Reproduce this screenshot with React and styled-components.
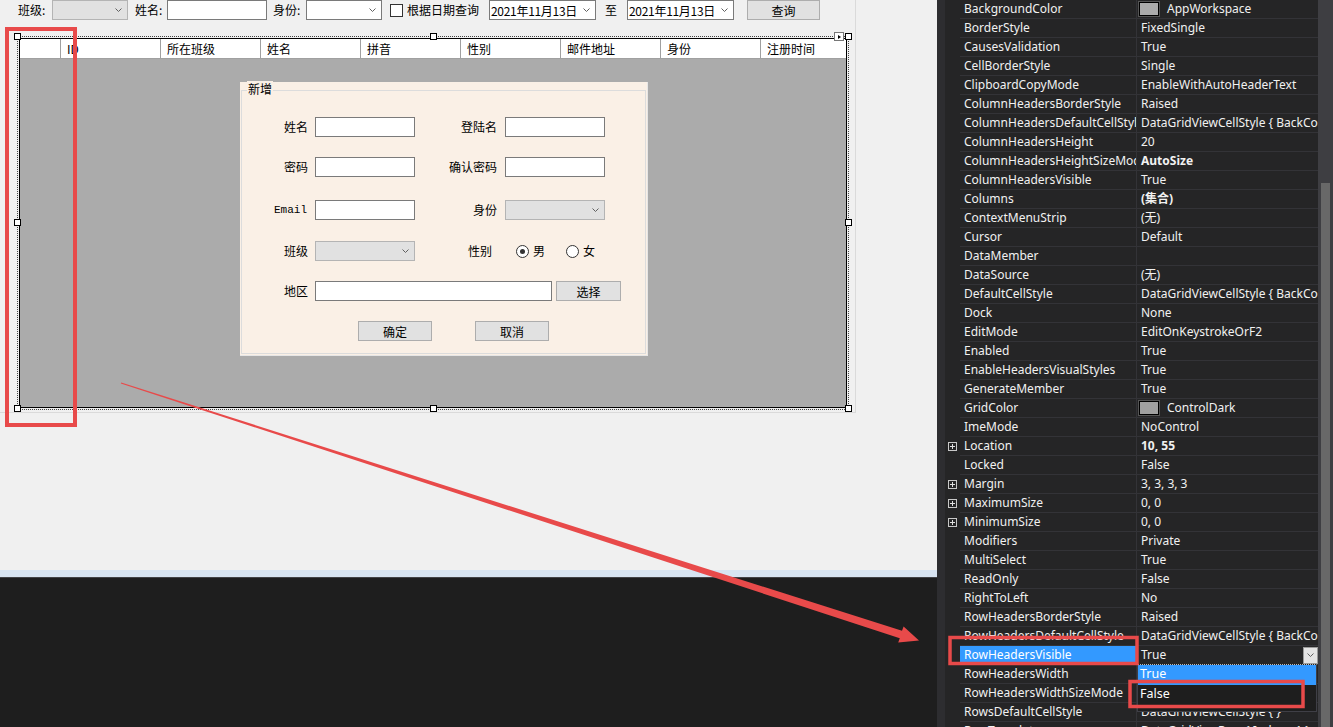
import React from 'react';
import styled, { createGlobalStyle } from 'styled-components';

const GlobalStyle = createGlobalStyle`
  html, body {
    margin: 0;
    padding: 0;
    overflow: hidden;
  }
  body {
    width: 1333px;
    height: 727px;
    font-family: "Noto Sans CJK SC", "Noto Sans", sans-serif;
  }
`;

const Screen = styled.div`
  position: relative;
  width: 1333px;
  height: 727px;
  display: flex;
  overflow: hidden;
`;

/* ---------- designer (left) ---------- */

const Designer = styled.div`
  width: 937px;
  display: flex;
  flex-direction: column;
`;

const Surface = styled.div`
  height: 570px;
  background: #f0f0f0;
`;

const Band = styled.div`
  height: 7px;
  background: #d8e4f1;
`;

const Output = styled.div`
  flex: 1;
  background: #1e1e1e;
  border-top: 1px solid #434346;
`;

const Form = styled.div`
  box-sizing: border-box;
  width: 856px;
  height: 413px;
  border-right: 1px solid #dadada;
  border-bottom: 1px solid #dadada;
  font-size: 12px;
  color: #000;
`;

const Toolbar = styled.div`
  display: flex;
  align-items: center;
  height: 20px;
`;

const Label = styled.span`
  flex: none;
  width: ${(p) => p.$w}px;
  margin-left: ${(p) => p.$ml || 0}px;
  padding-right: ${(p) => p.$pr || 0}px;
  box-sizing: border-box;
  text-align: ${(p) => (p.$right ? 'right' : 'left')};
  font-size: 12px;
  line-height: 20px;
  white-space: nowrap;
`;

const MonoLabel = styled(Label)`
  font-family: "Liberation Mono", monospace;
  font-size: 11px;
`;

const TextBox = styled.div`
  flex: none;
  box-sizing: border-box;
  width: ${(p) => p.$w}px;
  height: 20px;
  margin-left: ${(p) => p.$ml || 0}px;
  background: #fff;
  border: 1px solid #7a7a7a;
`;

const Combo = styled.div`
  flex: none;
  box-sizing: border-box;
  width: ${(p) => p.$w}px;
  height: 20px;
  margin-left: ${(p) => p.$ml || 0}px;
  display: flex;
  align-items: center;
  padding: 0 5px 0 1px;
  background: ${(p) => (p.$disabled ? '#e1e1e1' : '#fff')};
  border: 1px solid ${(p) => (p.$disabled ? '#b4b4b4' : '#7a7a7a')};
  font-size: 12px;
  white-space: nowrap;
  overflow: hidden;
`;

const ComboText = styled.span`
  flex: 1;
  letter-spacing: -0.3px;
`;

const Button = styled.div`
  flex: none;
  box-sizing: border-box;
  width: ${(p) => p.$w}px;
  height: 20px;
  margin-left: ${(p) => p.$ml || 0}px;
  background: #e1e1e1;
  border: 1px solid #adadad;
  display: flex;
  align-items: center;
  justify-content: center;
  font-size: 12px;
`;

const CheckBox = styled.div`
  flex: none;
  box-sizing: border-box;
  width: 13px;
  height: 13px;
  margin-left: ${(p) => p.$ml || 0}px;
  background: #fff;
  border: 1px solid #333;
`;

const Radio = styled.div`
  flex: none;
  box-sizing: border-box;
  width: 13px;
  height: 13px;
  margin-left: ${(p) => p.$ml || 0}px;
  border-radius: 50%;
  border: 1px solid #333;
  background: #fff;
  display: flex;
  align-items: center;
  justify-content: center;

  &::after {
    content: '';
    display: ${(p) => (p.$checked ? 'block' : 'none')};
    width: 5px;
    height: 5px;
    border-radius: 50%;
    background: #333;
  }
`;

const Chevron = () => (
  <svg width="7" height="4" viewBox="0 0 7 4">
    <polyline points="0.5,0.5 3.5,3.5 6.5,0.5" fill="none" stroke="#606060" strokeWidth="1" />
  </svg>
);

/* ---------- data grid ---------- */

const GridFrame = styled.div`
  position: relative;
  box-sizing: border-box;
  width: 832px;
  height: 374px;
  margin: 16px 0 0 17px;
  border: 1px dotted #444;
  padding: 1px;
`;

const Handle = styled.div`
  position: absolute;
  left: ${(p) => p.$x - 4}px;
  top: ${(p) => p.$y - 4}px;
  width: 5px;
  height: 5px;
  background: #fff;
  border: 1px solid #000;
`;

const SmartTag = styled.div`
  position: absolute;
  right: 4px;
  top: -5px;
  width: 8px;
  height: 7px;
  background: #fff;
  border: 1px solid #777;
  display: flex;
  align-items: center;
  justify-content: center;

  &::after {
    content: '';
    border-left: 3px solid #000;
    border-top: 2px solid transparent;
    border-bottom: 2px solid transparent;
  }
`;

const Grid = styled.div`
  box-sizing: border-box;
  width: 828px;
  height: 370px;
  border: 1px solid #000;
  background: #ababab;
  display: flex;
  flex-direction: column;
`;

const HeaderRow = styled.div`
  flex: none;
  display: flex;
  height: 20px;
  box-sizing: border-box;
  background: #fff;
  border-bottom: 1px solid #a0a0a0;
`;

const HeaderCell = styled.div`
  flex: ${(p) => (p.$fill ? 1 : 'none')};
  width: ${(p) => p.$w}px;
  box-sizing: border-box;
  border-right: ${(p) => (p.$fill ? 'none' : '1px solid #a0a0a0')};
  padding-left: 6px;
  font-size: 12px;
  line-height: 19px;
  white-space: nowrap;
`;

const GridBody = styled.div`
  flex: 1;
  padding: 23px 0 0 220px;
`;

/* ---------- linen panel / group box ---------- */

const Panel = styled.div`
  box-sizing: border-box;
  width: 408px;
  height: 274px;
  padding: 8px 1px 1px;
  background: #faf0e6;
  border-right: 1px solid #e6e6e6;
  border-bottom: 1px solid #e6e6e6;
  display: flex;
`;

const GroupBox = styled.div`
  position: relative;
  flex: 1;
  border: 1px solid #dcdcdc;
  padding-top: 26px;
  display: flex;
  flex-direction: column;
`;

const Legend = styled.span`
  position: absolute;
  left: 5px;
  top: -10px;
  padding: 0 1px;
  background: #faf0e6;
  font-size: 12px;
  line-height: 16px;
`;

const FieldRow = styled.div`
  display: flex;
  align-items: center;
  height: 20px;
  margin-top: ${(p) => p.$mt || 0}px;
  padding-left: ${(p) => p.$pl || 0}px;
`;

/* ---------- property grid (right) ---------- */

const Props = styled.div`
  flex: 1;
  display: flex;
  background: #252526;
  font-family: "Noto Sans", "Noto Sans CJK SC", sans-serif;
  font-size: 12px;
  color: #f1f1f1;
`;

const Strip = styled.div`
  width: 8px;
  background: #2d2d30;
`;

const PropArea = styled.div`
  position: relative;
  width: 373px;
  overflow: hidden;
`;

const PropList = styled.div`
  display: flex;
  flex-direction: column;
`;

const PropRow = styled.div`
  display: flex;
  height: 19px;
`;

const Gutter = styled.div`
  flex: none;
  width: 15px;
  display: flex;
  align-items: center;
  justify-content: center;
`;

const Expander = styled.div`
  position: relative;
  width: 7px;
  height: 7px;
  border: 1px solid #c8c8c8;

  &::before,
  &::after {
    content: '';
    position: absolute;
    background: #e0e0e0;
  }
  &::before {
    left: 1px;
    top: 3px;
    width: 5px;
    height: 1px;
  }
  &::after {
    left: 3px;
    top: 1px;
    width: 1px;
    height: 5px;
  }
`;

const NameCell = styled.div`
  flex: none;
  width: 177px;
  box-sizing: border-box;
  padding-left: 4px;
  border-right: 1px solid #333337;
  border-bottom: 1px solid #333337;
  background: ${(p) => (p.$selected ? '#3399ff' : 'transparent')};
  color: ${(p) => (p.$selected ? '#fff' : '#f1f1f1')};
  line-height: 18px;
  white-space: nowrap;
  overflow: hidden;
`;

const ValueCell = styled.div`
  flex: 1;
  min-width: 0;
  box-sizing: border-box;
  padding-left: 4px;
  border-bottom: 1px solid #333337;
  display: flex;
  align-items: center;
  line-height: 18px;
  font-weight: ${(p) => (p.$bold ? 700 : 400)};
  white-space: nowrap;
  overflow: hidden;
`;

const Swatch = styled.span`
  flex: none;
  width: 18px;
  height: 12px;
  margin: 0 8px 0 -2px;
  background: ${(p) => p.$color};
  border: 1px solid #000;
  outline: 1px solid #555;
`;

const DropButton = styled.div`
  flex: none;
  margin-left: auto;
  width: 15px;
  height: 17px;
  box-sizing: border-box;
  background: #e4e4e4;
  border: 1px solid #9a9a9a;
  display: flex;
  align-items: center;
  justify-content: center;
`;

const DropList = styled.div`
  position: absolute;
  left: 192px;
  top: 664px;
  width: 180px;
  height: 48px;
  box-sizing: border-box;
  background: #1e1e1e;
  border: 1px solid #3f3f46;
  border-top: 1px dotted #bbb;
  font-size: 12.5px;
`;

const DropItem = styled.div`
  height: 20px;
  padding-left: 2px;
  line-height: 18px;
  background: ${(p) => (p.$active ? '#3399ff' : 'transparent')};
  color: #fff;
`;

const ScrollBar = styled.div`
  width: 15px;
  background: #3e3e42;
  display: flex;
  justify-content: center;
  padding-top: 183px;
  box-sizing: border-box;
`;

const Thumb = styled.div`
  width: 9px;
  height: 544px;
  background: #686868;
`;

const Overlay = styled.svg`
  position: absolute;
  left: 0;
  top: 0;
  pointer-events: none;
`;

const columns = ['ID', '所在班级', '姓名', '拼音', '性别', '邮件地址', '身份', '注册时间'];

const props = [
  { n: 'BackgroundColor', v: 'AppWorkspace', swatch: '#ababab' },
  { n: 'BorderStyle', v: 'FixedSingle' },
  { n: 'CausesValidation', v: 'True' },
  { n: 'CellBorderStyle', v: 'Single' },
  { n: 'ClipboardCopyMode', v: 'EnableWithAutoHeaderText' },
  { n: 'ColumnHeadersBorderStyle', v: 'Raised' },
  { n: 'ColumnHeadersDefaultCellStyle', v: 'DataGridViewCellStyle { BackColor=Color [Control] }' },
  { n: 'ColumnHeadersHeight', v: '20' },
  { n: 'ColumnHeadersHeightSizeMode', v: 'AutoSize', bold: true },
  { n: 'ColumnHeadersVisible', v: 'True' },
  { n: 'Columns', v: '(集合)', bold: true },
  { n: 'ContextMenuStrip', v: '(无)' },
  { n: 'Cursor', v: 'Default' },
  { n: 'DataMember', v: '' },
  { n: 'DataSource', v: '(无)' },
  { n: 'DefaultCellStyle', v: 'DataGridViewCellStyle { BackColor=Color [Window] }' },
  { n: 'Dock', v: 'None' },
  { n: 'EditMode', v: 'EditOnKeystrokeOrF2' },
  { n: 'Enabled', v: 'True' },
  { n: 'EnableHeadersVisualStyles', v: 'True' },
  { n: 'GenerateMember', v: 'True' },
  { n: 'GridColor', v: 'ControlDark', swatch: '#a0a0a0' },
  { n: 'ImeMode', v: 'NoControl' },
  { n: 'Location', v: '10, 55', bold: true, expand: true },
  { n: 'Locked', v: 'False' },
  { n: 'Margin', v: '3, 3, 3, 3', expand: true },
  { n: 'MaximumSize', v: '0, 0', expand: true },
  { n: 'MinimumSize', v: '0, 0', expand: true },
  { n: 'Modifiers', v: 'Private' },
  { n: 'MultiSelect', v: 'True' },
  { n: 'ReadOnly', v: 'False' },
  { n: 'RightToLeft', v: 'No' },
  { n: 'RowHeadersBorderStyle', v: 'Raised' },
  { n: 'RowHeadersDefaultCellStyle', v: 'DataGridViewCellStyle { BackColor=Color [Control] }' },
  { n: 'RowHeadersVisible', v: 'True', selected: true },
  { n: 'RowHeadersWidth', v: '41' },
  { n: 'RowHeadersWidthSizeMode', v: 'EnableResizing' },
  { n: 'RowsDefaultCellStyle', v: 'DataGridViewCellStyle { }' },
  { n: 'RowTemplate', v: 'DataGridViewRow { Index=-1 }', expand: true },
];

const handles = [
  [0, 0], [416, 0], [831, 0],
  [0, 186], [831, 186],
  [0, 372], [416, 372], [831, 372],
];

const red = '#e84a4a';

export default function App() {
  return (
    <Screen>
      <GlobalStyle />
      <Designer>
        <Surface>
          <Form>
            <Toolbar>
              <Label $w={34} $ml={18}>班级:</Label>
              <Combo $w={76} $disabled>
                <ComboText />
                <Chevron />
              </Combo>
              <Label $w={32} $ml={7}>姓名:</Label>
              <TextBox $w={100} />
              <Label $w={33} $ml={6}>身份:</Label>
              <Combo $w={76}>
                <ComboText />
                <Chevron />
              </Combo>
              <CheckBox $ml={8} />
              <Label $w={82} $ml={4}>根据日期查询</Label>
              <Combo $w={107}>
                <ComboText>2021年11月13日</ComboText>
                <Chevron />
              </Combo>
              <Label $w={22} $ml={9}>至</Label>
              <Combo $w={107}>
                <ComboText>2021年11月13日</ComboText>
                <Chevron />
              </Combo>
              <Button $w={73} $ml={13}>查询</Button>
            </Toolbar>

            <GridFrame>
              <Grid>
                <HeaderRow>
                  <HeaderCell $w={41} />
                  {columns.map((c, i) => (
                    <HeaderCell key={c} $w={100} $fill={i === columns.length - 1}>
                      {c}
                    </HeaderCell>
                  ))}
                </HeaderRow>
                <GridBody>
                  <Panel>
                    <GroupBox>
                      <Legend>新增</Legend>
                      <FieldRow>
                        <Label $w={66} $right>姓名</Label>
                        <TextBox $w={100} $ml={7} />
                        <Label $w={82} $right>登陆名</Label>
                        <TextBox $w={100} $ml={8} />
                      </FieldRow>
                      <FieldRow $mt={20}>
                        <Label $w={66} $right>密码</Label>
                        <TextBox $w={100} $ml={7} />
                        <Label $w={82} $right>确认密码</Label>
                        <TextBox $w={100} $ml={8} />
                      </FieldRow>
                      <FieldRow $mt={23}>
                        <MonoLabel $w={66} $pr={1} $right>Email</MonoLabel>
                        <TextBox $w={100} $ml={7} />
                        <Label $w={82} $right>身份</Label>
                        <Combo $w={100} $ml={8} $disabled>
                          <ComboText />
                          <Chevron />
                        </Combo>
                      </FieldRow>
                      <FieldRow $mt={21}>
                        <Label $w={66} $right>班级</Label>
                        <Combo $w={100} $ml={7} $disabled>
                          <ComboText />
                          <Chevron />
                        </Combo>
                        <Label $w={82} $pr={5} $right>性别</Label>
                        <Radio $ml={19} $checked />
                        <Label $w={14} $ml={4}>男</Label>
                        <Radio $ml={19} />
                        <Label $w={14} $ml={4}>女</Label>
                      </FieldRow>
                      <FieldRow $mt={20}>
                        <Label $w={66} $right>地区</Label>
                        <TextBox $w={237} $ml={7} />
                        <Button $w={65} $ml={4}>选择</Button>
                      </FieldRow>
                      <FieldRow $mt={20} $pl={116}>
                        <Button $w={74}>确定</Button>
                        <Button $w={74} $ml={43}>取消</Button>
                      </FieldRow>
                    </GroupBox>
                  </Panel>
                </GridBody>
              </Grid>
              {handles.map(([x, y]) => (
                <Handle key={`${x}-${y}`} $x={x} $y={y} />
              ))}
              <SmartTag />
            </GridFrame>
          </Form>
        </Surface>
        <Band />
        <Output />
      </Designer>

      <Props>
        <Strip />
        <PropArea>
          <PropList>
            {props.map((p) => (
              <PropRow key={p.n}>
                <Gutter>{p.expand && <Expander />}</Gutter>
                <NameCell $selected={p.selected}>{p.n}</NameCell>
                <ValueCell $bold={p.bold}>
                  {p.swatch && <Swatch $color={p.swatch} />}
                  {p.v}
                  {p.selected && (
                    <DropButton>
                      <Chevron />
                    </DropButton>
                  )}
                </ValueCell>
              </PropRow>
            ))}
          </PropList>
          <DropList>
            <DropItem $active>True</DropItem>
            <DropItem>False</DropItem>
          </DropList>
        </PropArea>
        <ScrollBar>
          <Thumb />
        </ScrollBar>
      </Props>

      <Overlay width="1333" height="727" viewBox="0 0 1333 727">
        <rect x="7" y="29" width="68" height="396" fill="none" stroke={red} strokeWidth="4" />
        <rect x="950" y="637.5" width="187" height="26" fill="none" stroke={red} strokeWidth="3.5" />
        <rect x="1130" y="681.5" width="173" height="25" fill="none" stroke={red} strokeWidth="3.5" />
        <polygon
          points="121.2,382.5 902,630.8 903.6,626.6 919,640.6 898.2,642.4 899.8,638.2 120.8,383.5"
          fill={red}
        />
      </Overlay>
    </Screen>
  );
}
